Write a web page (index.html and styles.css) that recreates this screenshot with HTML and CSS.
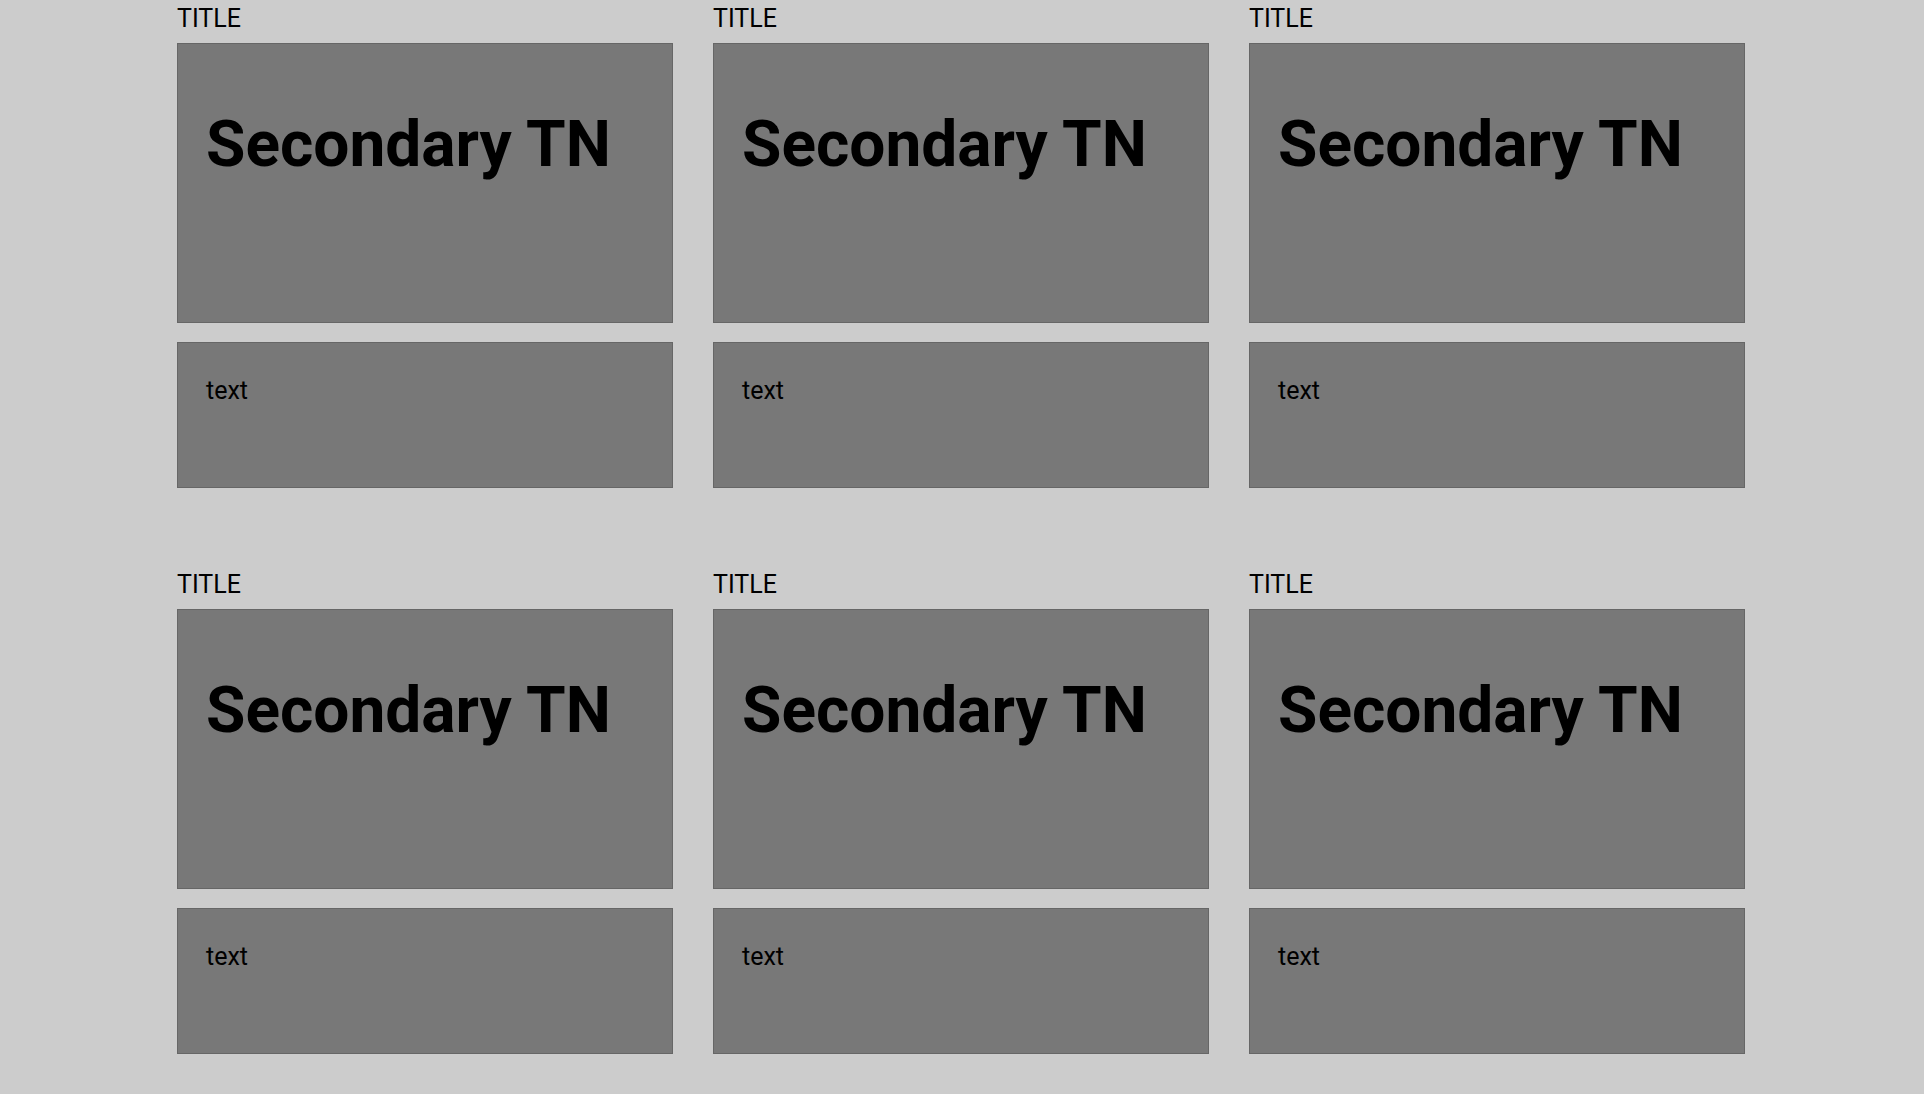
FILE: index.html
```html
<!DOCTYPE html>
<html lang="en">
<head>
<meta charset="utf-8">
<title>Secondary TN</title>
<link rel="stylesheet" href="styles.css">
</head>
<body>
<main class="grid">
  <section class="card">
    <div class="card-title">TITLE</div>
    <div class="panel panel-main"><h2 class="headline">Secondary TN</h2></div>
    <div class="panel panel-text"><p class="body-text">text</p></div>
  </section>
  <section class="card">
    <div class="card-title">TITLE</div>
    <div class="panel panel-main"><h2 class="headline">Secondary TN</h2></div>
    <div class="panel panel-text"><p class="body-text">text</p></div>
  </section>
  <section class="card">
    <div class="card-title">TITLE</div>
    <div class="panel panel-main"><h2 class="headline">Secondary TN</h2></div>
    <div class="panel panel-text"><p class="body-text">text</p></div>
  </section>
  <section class="card">
    <div class="card-title">TITLE</div>
    <div class="panel panel-main"><h2 class="headline">Secondary TN</h2></div>
    <div class="panel panel-text"><p class="body-text">text</p></div>
  </section>
  <section class="card">
    <div class="card-title">TITLE</div>
    <div class="panel panel-main"><h2 class="headline">Secondary TN</h2></div>
    <div class="panel panel-text"><p class="body-text">text</p></div>
  </section>
  <section class="card">
    <div class="card-title">TITLE</div>
    <div class="panel panel-main"><h2 class="headline">Secondary TN</h2></div>
    <div class="panel panel-text"><p class="body-text">text</p></div>
  </section>
</main>
</body>
</html>
```
FILE: styles.css
```css
html, body {
  margin: 0;
  padding: 0;
}
body {
  background: #cccccc;
  font-family: Roboto, "Liberation Sans", sans-serif;
  color: #000;
  height: 1094px;
  overflow: hidden;
  padding: 4px 0 0 177px;
  box-sizing: border-box;
}
.grid {
  width: 1568px;
  display: grid;
  grid-template-columns: repeat(3, 496px);
  column-gap: 40px;
  row-gap: 82px;
}
.card {
  display: flex;
  flex-direction: column;
}
.card-title {
  font-size: 25px;
  line-height: 30px;
  margin-bottom: 9px;
}
.panel {
  background: #787878;
  border: 1px solid #666666;
  box-sizing: border-box;
  padding: 0 28px;
}
.panel-main {
  height: 280px;
  padding-top: 63px;
}
.panel-text {
  height: 146px;
  margin-top: 19px;
  padding-top: 34px;
}
.headline {
  margin: 0;
  font-size: 64px;
  font-weight: 700;
  line-height: 75px;
}
.body-text {
  margin: 0;
  font-size: 25px;
  line-height: 28px;
}
```
